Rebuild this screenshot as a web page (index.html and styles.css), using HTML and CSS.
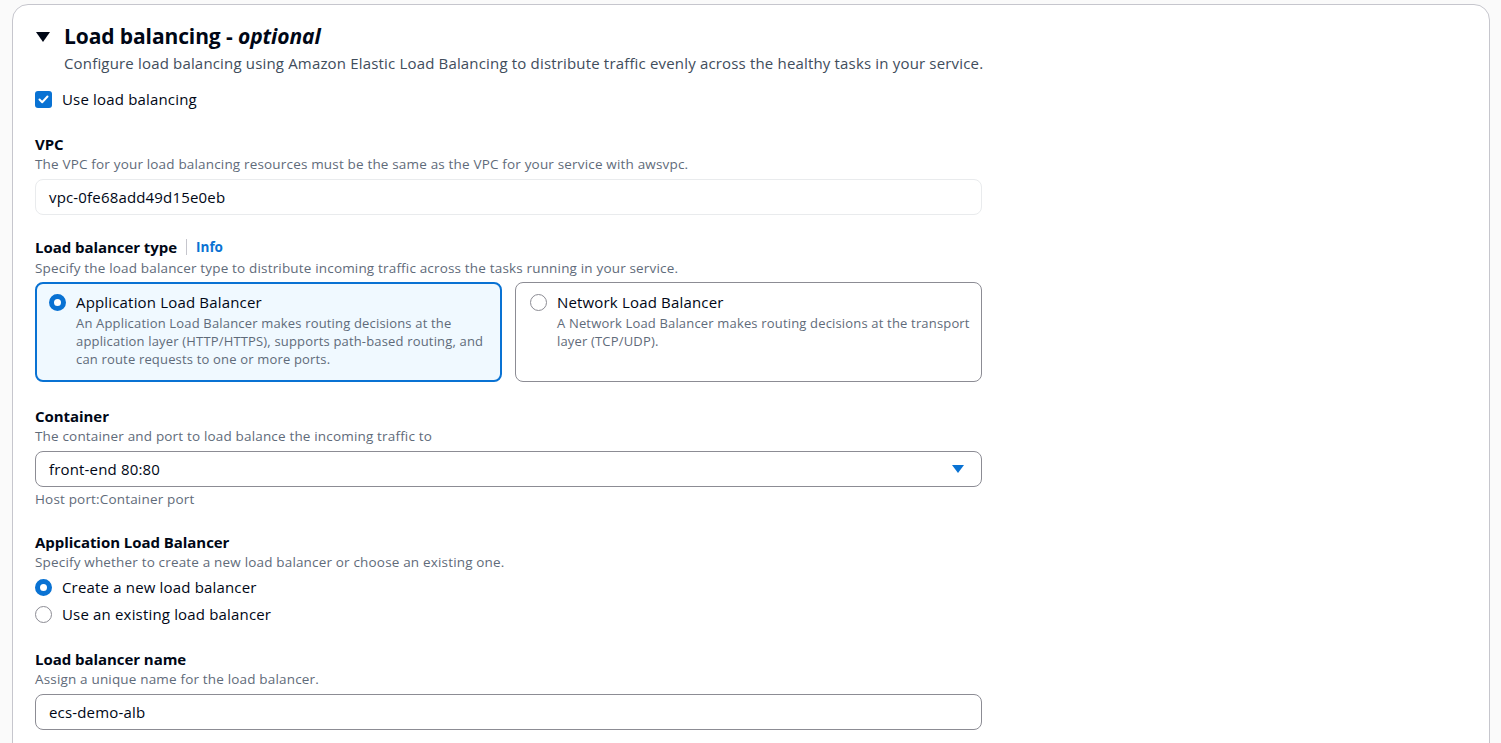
FILE: index.html
```html
<!DOCTYPE html>
<html lang="en">
<head>
<meta charset="utf-8">
<title>Load balancing</title>
<link rel="stylesheet" href="styles.css">
</head>
<body>
<div class="page">
  <section class="card">
    <header class="card-header">
      <span class="expander">
        <svg width="14" height="10" viewBox="0 0 14 10"><polygon points="0,0 14,0 7,10" fill="#000716"/></svg>
      </span>
      <div class="header-text">
        <h2 class="title">Load balancing - <i>optional</i></h2>
        <p class="title-desc">Configure load balancing using Amazon Elastic Load Balancing to distribute traffic evenly across the healthy tasks in your service.</p>
      </div>
    </header>

    <div class="body">
      <label class="check-row">
        <span class="checkbox">
          <svg width="11" height="9" viewBox="0 0 11 9"><polyline points="1.5,4.5 4.2,7.2 9.5,1.5" fill="none" stroke="#fff" stroke-width="2" stroke-linecap="round" stroke-linejoin="round"/></svg>
        </span>
        <span class="check-label">Use load balancing</span>
      </label>

      <div class="field field-vpc">
        <div class="label">VPC</div>
        <div class="desc">The VPC for your load balancing resources must be the same as the VPC for your service with awsvpc.</div>
        <div class="input input-disabled">vpc-0fe68add49d15e0eb</div>
      </div>

      <div class="field field-type">
        <div class="label label-info"><span>Load balancer type</span><span class="sep"></span><a class="info">Info</a></div>
        <div class="desc">Specify the load balancer type to distribute incoming traffic across the tasks running in your service.</div>
        <div class="tiles">
          <div class="tile tile-selected">
            <span class="radio radio-on"></span>
            <div class="tile-text">
              <div class="tile-title">Application Load Balancer</div>
              <div class="tile-desc">An Application Load Balancer makes routing decisions at the application layer (HTTP/HTTPS), supports path-based routing, and can route requests to one or more ports.</div>
            </div>
          </div>
          <div class="tile">
            <span class="radio"></span>
            <div class="tile-text">
              <div class="tile-title">Network Load Balancer</div>
              <div class="tile-desc">A Network Load Balancer makes routing decisions at the transport layer (TCP/UDP).</div>
            </div>
          </div>
        </div>
      </div>

      <div class="field field-container">
        <div class="label">Container</div>
        <div class="desc">The container and port to load balance the incoming traffic to</div>
        <div class="input select">
          <span>front-end 80:80</span>
          <svg class="caret" width="12" height="9" viewBox="0 0 12 9"><polygon points="0,0 12,0 6,8" fill="#0972d3"/></svg>
        </div>
        <div class="hint">Host port:Container port</div>
      </div>

      <div class="field">
        <div class="label">Application Load Balancer</div>
        <div class="desc">Specify whether to create a new load balancer or choose an existing one.</div>
        <div class="radio-group">
          <label class="radio-row"><span class="radio radio-on"></span><span>Create a new load balancer</span></label>
          <label class="radio-row"><span class="radio"></span><span>Use an existing load balancer</span></label>
        </div>
      </div>

      <div class="field field-name">
        <div class="label">Load balancer name</div>
        <div class="desc">Assign a unique name for the load balancer.</div>
        <div class="input">ecs-demo-alb</div>
      </div>
    </div>
  </section>
</div>
</body>
</html>
```

FILE: styles.css
```css
* { box-sizing: border-box; }
html, body { margin: 0; padding: 0; }
body {
  background: #fafafa;
  font-family: "Open Sans", Roboto, Arial, sans-serif;
  color: #000716;
  font-size: 15px;
  letter-spacing: 0.17px;
  line-height: 20px;
  overflow: hidden;
}
.page { padding: 4px 11px 0 12px; }
.card {
  background: #fff;
  border: 1px solid #c6c6cd;
  border-radius: 16px;
  padding: 18px 22px 40px 22px;
  min-height: 800px;
}
.card-header { display: flex; align-items: flex-start; }
.expander { width: 29px; padding-top: 9px; padding-left: 1px; display: flex; }
.title { margin: 0; font-size: 21px; line-height: 26px; font-weight: 700; letter-spacing: -0.1px; }
.title i { font-weight: 700; }
.title-desc { margin: 4px 0 0; color: #414d5c; font-size: 15px; line-height: 20px; }

.body { width: 947px; }
.check-row { display: flex; align-items: center; gap: 10px; margin-top: 16px; }
.checkbox {
  width: 17px; height: 17px; border-radius: 3px; background: #0972d3;
  display: flex; align-items: center; justify-content: center;
}
.check-label { line-height: 20px; }

.field { margin-top: 23px; }
.field-vpc { margin-top: 24px; }
.field-type { margin-top: 20px; }
.field-container { margin-top: 23px; }
.field-name { margin-top: 24px; }
.label { font-weight: 700; font-size: 15px; line-height: 22px; letter-spacing: -0.05px; }
.label-info { display: flex; align-items: center; height: 24px; }
.sep { width: 1px; height: 16px; background: #c6c6cd; margin: 0 9px 0 9px; }
.info { color: #0972d3; font-size: 13.5px; font-weight: 700; letter-spacing: 0; }
.desc { color: #5f6b7a; font-size: 13.5px; line-height: 18px; }
.hint { color: #5f6b7a; font-size: 13.5px; line-height: 18px; margin-top: 3px; }

.input {
  margin-top: 6px;
  height: 36px;
  border: 1px solid #8c8c94;
  border-radius: 8px;
  padding: 0 13px;
  display: flex; align-items: center;
  font-size: 15px;
}
.input-disabled { border-color: #e9ebed; }
.select { justify-content: space-between; padding-right: 17px; }

.tiles { display: grid; grid-template-columns: 1fr 1fr; gap: 13px; margin-top: 5px; }
.tile {
  border: 1px solid #8c8c94;
  border-radius: 8px;
  height: 100px;
  display: flex; gap: 10px;
  padding: 9px 4px 9px 14px;
}
.tile-selected { border: 2px solid #0972d3; background: #f0f9ff; padding: 8px 3px 8px 12px; }
.tile-title { font-size: 15px; line-height: 20px; }
.tile-desc { color: #5f6b7a; font-size: 13px; line-height: 18px; margin-top: 2px; letter-spacing: 0.17px; }
.tile .radio { margin-top: 2px; }

.radio {
  flex: none;
  width: 17px; height: 17px; border-radius: 50%;
  border: 1px solid #8c8c94; background: #fff;
  display: inline-block;
}
.radio-on { border: 5px solid #0972d3; }

.radio-group { margin-top: 6px; display: flex; flex-direction: column; gap: 7px; }
.radio-row { display: flex; align-items: center; gap: 10px; }
```
